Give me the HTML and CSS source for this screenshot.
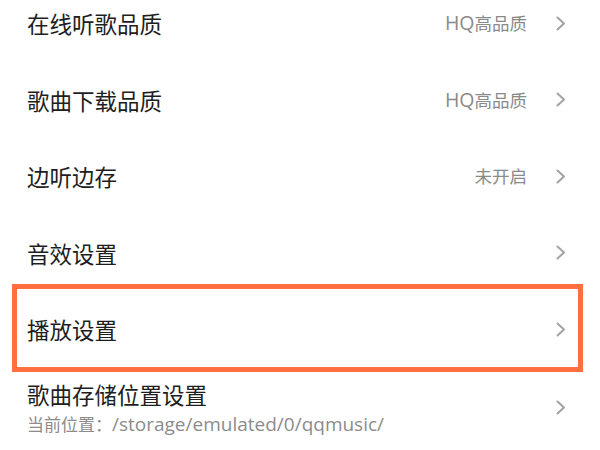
FILE: index.html
```html
<!DOCTYPE html>
<html lang="zh-CN">
<head>
<meta charset="utf-8">
<link rel="stylesheet" href="styles.css">
</head>
<body>
<div class="list">
  <div class="row">
    <div class="main"><div class="title">在线听歌品质</div></div>
    <span class="value"><span class="latin">HQ</span>高品质</span>
    <svg class="chev" viewBox="0 0 10 15" width="10" height="15"><polyline points="1.5,1.5 8,7.5 1.5,13.5"/></svg>
  </div>
  <div class="row">
    <div class="main"><div class="title">歌曲下载品质</div></div>
    <span class="value"><span class="latin">HQ</span>高品质</span>
    <svg class="chev" viewBox="0 0 10 15" width="10" height="15"><polyline points="1.5,1.5 8,7.5 1.5,13.5"/></svg>
  </div>
  <div class="row">
    <div class="main"><div class="title">边听边存</div></div>
    <span class="value">未开启</span>
    <svg class="chev" viewBox="0 0 10 15" width="10" height="15"><polyline points="1.5,1.5 8,7.5 1.5,13.5"/></svg>
  </div>
  <div class="row">
    <div class="main"><div class="title">音效设置</div></div>
    <svg class="chev" viewBox="0 0 10 15" width="10" height="15"><polyline points="1.5,1.5 8,7.5 1.5,13.5"/></svg>
  </div>
  <div class="row highlighted">
    <div class="main"><div class="title">播放设置</div></div>
    <svg class="chev" viewBox="0 0 10 15" width="10" height="15"><polyline points="1.5,1.5 8,7.5 1.5,13.5"/></svg>
    <div class="highlight-box"></div>
  </div>
  <div class="row tall">
    <div class="main">
      <div class="title">歌曲存储位置设置</div>
      <div class="sub">当前位置：<span class="path">/storage/emulated/0/qqmusic/</span></div>
    </div>
    <svg class="chev" viewBox="0 0 10 15" width="10" height="15"><polyline points="1.5,1.5 8,7.5 1.5,13.5"/></svg>
  </div>
</div>
</body>
</html>
```
FILE: styles.css
```css
html, body {
  margin: 0;
  padding: 0;
  background: #ffffff;
  overflow: hidden;
}
body {
  width: 600px;
  height: 450px;
  font-family: "Noto Sans CJK SC", "Noto Sans", sans-serif;
}
.list {
  margin-top: -15px;
  display: flex;
  flex-direction: column;
}
.row {
  position: relative;
  display: flex;
  align-items: center;
  height: 76.5px;
  padding: 0 34px 0 27px;
}
.row.tall {
  height: 80px;
}
.main {
  flex: 1;
  display: flex;
  flex-direction: column;
}
.title {
  font-size: 22.5px;
  line-height: 30px;
  color: #1e1e1e;
}
.sub {
  font-size: 17px;
  line-height: 24px;
  color: #8c8c8c;
  margin-top: 3px;
}
.sub .path {
  font-family: "Open Sans", "Noto Sans", sans-serif;
  font-size: 19px;
}
.value {
  font-size: 17.5px;
  line-height: 24px;
  color: #8a8a8a;
  margin-right: 29px;
}
.value .latin {
  font-family: "Open Sans", "Noto Sans", sans-serif;
  font-size: 19.5px;
}
.chev {
  flex: none;
  width: 10px;
  height: 15px;
}
.chev polyline {
  fill: none;
  stroke: #a3a3a3;
  stroke-width: 2;
  stroke-linecap: round;
  stroke-linejoin: round;
}
.highlight-box {
  position: absolute;
  left: 12px;
  right: 17px;
  top: -7px;
  bottom: -4px;
  border: 5px solid #ff6f3f;
  pointer-events: none;
}
```
